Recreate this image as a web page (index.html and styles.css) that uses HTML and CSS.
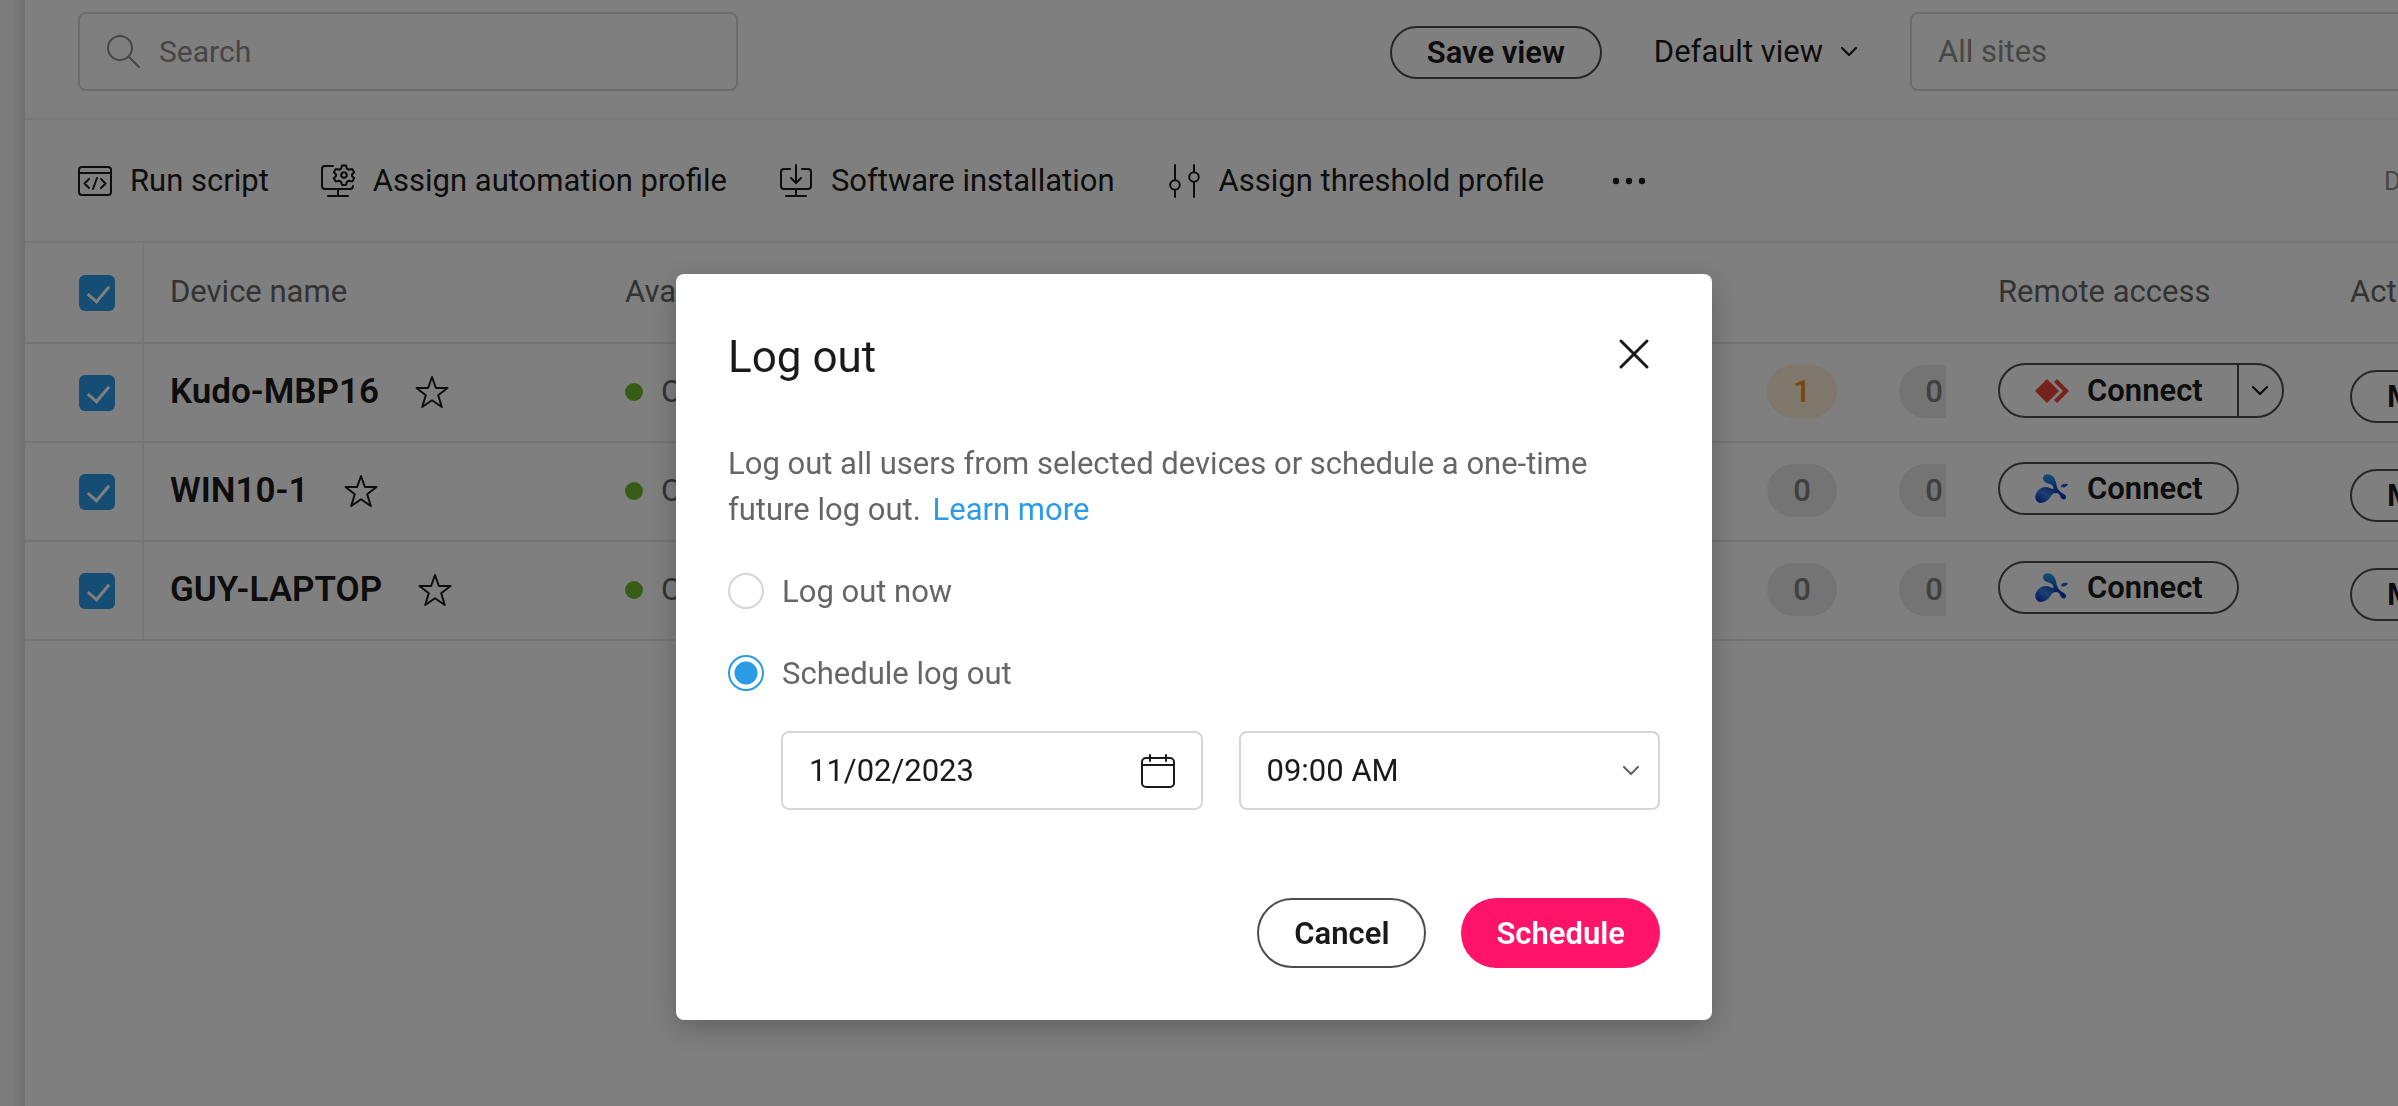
FILE: index.html
```html
<!DOCTYPE html>
<html lang="en">
<head>
<meta charset="UTF-8" />
<meta name="viewport" content="width=device-width, initial-scale=1" />
<title>Devices</title>
<link rel="stylesheet" href="styles.css">
</head>
<body>

<!-- Shared icons -->
<svg class="sprite" aria-hidden="true">
  <defs>
    <linearGradient id="drop" x1="0" y1="0" x2="0" y2="1">
      <stop offset="0" stop-color="#2aa0f4" />
      <stop offset="0.6" stop-color="#0d50c0" />
      <stop offset="1" stop-color="#0a28c0" />
    </linearGradient>
    <linearGradient id="drop-big" x1="1" y1="0" x2="0" y2="1">
      <stop offset="0" stop-color="#0a3ca8" />
      <stop offset="0.5" stop-color="#3a80e8" />
      <stop offset="1" stop-color="#0020b8" />
    </linearGradient>
  </defs>
  <symbol id="star" viewBox="0 0 34 34">
    <path d="M17 2l3.900 11h11.600l-9.300 7.200 3.600 11.800L17 25.200 7.200 32l3.600-11.800L1.500 13h11.600z" fill="none" stroke="currentColor" stroke-width="2" stroke-linejoin="round" />
  </symbol>
  <symbol id="chevron" viewBox="0 0 18 12">
    <path d="M2 2l7 7 7-7" fill="none" stroke="currentColor" stroke-width="2.200" stroke-linecap="round" stroke-linejoin="round" />
  </symbol>
  <symbol id="splash" viewBox="0 0 34 30">
    <path d="M8 5C7 1 12-1 16 1c5 3 5 8 6 12 1 3 3 4 5 6 2 1 4 2 4 4 0 3-3 3-5 1-1-3-2-5-5-5-2 0-4 1-6 3l3-6c1-3 0-5-3-6-4-1-6-2-7-5z" fill="url(#drop)" />
    <path d="M22 16c-3 1-4 3-6 6-2 4-6 7-11 7-5-1-6-7-3-11 3-5 9-6 13-4 3 1 5 2 7 2z" fill="url(#drop-big)" />
    <path d="M26 13c0-3 3-4 7-3-1 3-4 4-7 3z" fill="#1660d8" />
  </symbol>
</svg>

<div class="app">
  <div class="sidebar-edge"></div>
  <main class="page">
    <header class="topbar">
      <label class="search">
        <svg width="34" height="34" viewBox="0 0 34 34" fill="none" stroke="currentColor" stroke-width="2" stroke-linecap="round"><circle cx="13" cy="13" r="12" /><path d="M22 22l10 10" /></svg>
        <input type="text" placeholder="Search" aria-label="Search" />
      </label>
      <button class="pill save-view">Save view</button>
      <button class="view-menu">Default view <svg width="18" height="12"><use href="#chevron" /></svg></button>
      <input class="sites" type="text" placeholder="All sites" aria-label="Sites" />
    </header>

    <nav class="toolbar">
      <button class="tool">
        <svg width="34" height="34" viewBox="0 0 34 34" fill="none" stroke="currentColor" stroke-width="2" stroke-linecap="round" stroke-linejoin="round"><rect x="1" y="3" width="32" height="28" rx="3" /><path d="M1 9h32M11 15l-4.500 4.500 4.500 4.500M23 15l4.500 4.500-4.500 4.500M19 14l-4 11" /></svg>
        Run script
      </button>
      <button class="tool">
        <svg width="34" height="34" viewBox="0 0 34 34" fill="none" stroke="currentColor" stroke-width="2" stroke-linecap="round" stroke-linejoin="round"><path d="M12 2H4a3 3 0 0 0-3 3v17a3 3 0 0 0 3 3h25a3 3 0 0 0 3-3M17 25v7M7 32h20" /><circle cx="23" cy="11" r="2.800" /><path d="M21 1.500h4l.8 3 2.400 1.300 3-.9 2 3.400-2.200 2.200v1.500l2.200 2.200-2 3.400-3-.9-2.400 1.300-.8 3h-4l-.8-3-2.400-1.300-3 .9-2-3.400 2.200-2.200v-1.500l-2.200-2.200 2-3.400 3 .9 2.400-1.300z" /></svg>
        Assign automation profile
      </button>
      <button class="tool">
        <svg width="34" height="34" viewBox="0 0 34 34" fill="none" stroke="currentColor" stroke-width="2" stroke-linecap="round" stroke-linejoin="round"><path d="M11 5H5a3 3 0 0 0-3 3v14a3 3 0 0 0 3 3h24a3 3 0 0 0 3-3V8a3 3 0 0 0-3-3h-6M17 1v17M12 14l5 5 5-5M17 25v7M7 32h20" /></svg>
        Software installation
      </button>
      <button class="tool">
        <svg width="34" height="34" viewBox="0 0 34 34" fill="none" stroke="currentColor" stroke-width="2" stroke-linecap="round"><path d="M8 1v15M8 26v7M27 1v7M27 18v15" /><circle cx="8" cy="21" r="4.800" /><circle cx="27" cy="13" r="4.800" /></svg>
        Assign threshold profile
      </button>
      <button class="more" aria-label="More actions">
        <svg width="34" height="8" viewBox="0 0 34 8" fill="currentColor"><circle cx="4" cy="4" r="3.200" /><circle cx="17" cy="4" r="3.200" /><circle cx="30" cy="4" r="3.200" /></svg>
      </button>
      <span class="device-count">Devices</span>
    </nav>

    <table class="devices">
      <thead>
        <tr>
          <th class="col-check"><input type="checkbox" aria-label="Select all" checked /></th>
          <th class="col-name">Device name</th>
          <th class="col-status">Availability</th>
          <th class="col-alert"></th>
          <th class="col-count"></th>
          <th class="col-remote">Remote access</th>
          <th class="col-actions">Actions</th>
        </tr>
      </thead>
      <tbody>
        <tr>
          <td class="col-check"><input type="checkbox" aria-label="Select Kudo-MBP16" checked /></td>
          <td><div class="device">Kudo-MBP16 <svg width="34" height="34"><use href="#star" /></svg></div></td>
          <td><div class="status">Online</div></td>
          <td><span class="badge warn">1</span></td>
          <td><div class="clip"><span class="badge">0</span></div></td>
          <td class="cell-remote">
            <div class="split">
              <button class="connect"><svg width="34" height="24" viewBox="0 0 34 24" fill="#ef443b"><path d="M12 0l12 12-12 12L0 12z" /><path d="M19 3l3-3 12 12-12 12-3-3 9-9z" /></svg> Connect</button>
              <button class="split-toggle" aria-label="Connect options"><svg width="18" height="12"><use href="#chevron" /></svg></button>
            </div>
          </td>
          <td class="cell-actions"><button class="pill manage">Manage</button></td>
        </tr>
        <tr>
          <td class="col-check"><input type="checkbox" aria-label="Select WIN10-1" checked /></td>
          <td><div class="device">WIN10-1 <svg width="34" height="34"><use href="#star" /></svg></div></td>
          <td><div class="status">Online</div></td>
          <td><span class="badge">0</span></td>
          <td><div class="clip"><span class="badge">0</span></div></td>
          <td class="cell-remote"><button class="pill connect"><svg width="34" height="30"><use href="#splash" /></svg> Connect</button></td>
          <td class="cell-actions"><button class="pill manage">Manage</button></td>
        </tr>
        <tr>
          <td class="col-check"><input type="checkbox" aria-label="Select GUY-LAPTOP" checked /></td>
          <td><div class="device">GUY-LAPTOP <svg width="34" height="34"><use href="#star" /></svg></div></td>
          <td><div class="status">Online</div></td>
          <td><span class="badge">0</span></td>
          <td><div class="clip"><span class="badge">0</span></div></td>
          <td class="cell-remote"><button class="pill connect"><svg width="34" height="30"><use href="#splash" /></svg> Connect</button></td>
          <td class="cell-actions"><button class="pill manage">Manage</button></td>
        </tr>
      </tbody>
    </table>
  </main>
</div>

<!-- Log out dialog -->
<div class="overlay">
  <form class="modal" role="dialog" aria-labelledby="modal-title">
    <div class="modal-head">
      <h2 id="modal-title">Log out</h2>
      <button type="button" class="close-btn" aria-label="Close">
        <svg width="32" height="32" viewBox="0 0 32 32" fill="none" stroke="currentColor" stroke-width="3" stroke-linecap="round"><path d="M3 3l26 26M29 3L3 29" /></svg>
      </button>
    </div>
    <p>Log out all users from selected devices or schedule a one-time future log out. <a href="#">Learn more</a></p>
    <label class="choice"><input type="radio" name="when" /> Log out now</label>
    <label class="choice"><input type="radio" name="when" checked /> Schedule log out</label>
    <div class="fields">
      <label class="field">
        <input type="text" value="11/02/2023" aria-label="Date" />
        <svg width="34" height="34" viewBox="0 0 34 34" fill="none" stroke="currentColor" stroke-width="2" stroke-linecap="round"><rect x="1" y="4" width="32" height="29" rx="4" /><path d="M1 11h32M9 1v6M25 1v6" /></svg>
      </label>
      <label class="field">
        <select aria-label="Time"><option>09:00 AM</option></select>
        <svg class="arrow" width="18" height="12"><use href="#chevron" /></svg>
      </label>
    </div>
    <div class="modal-actions">
      <button type="button" class="cancel">Cancel</button>
      <button type="submit" class="submit">Schedule</button>
    </div>
  </form>
</div>

</body>
</html>
```
FILE: styles.css
```css
* { box-sizing: border-box; }
body {
  margin: 0; height: 100vh; overflow: hidden; background: white;
  font-family: Roboto, sans-serif; font-size: 31px; color: #1a1a1a;
}
button, input, select { font: inherit; color: inherit; }
button { background: none; border: none; padding: 0; cursor: pointer; white-space: nowrap; }
svg { flex: none; display: block; }
.sprite { position: absolute; width: 0; height: 0; }

.app { display: flex; height: 100vh; overflow: hidden; }
.sidebar-edge { flex: none; width: 25px; background: linear-gradient(to right, #f8f8f8 50%, #e2e2e2); }
.page { flex: 1; min-width: 0; }

/* Top bar */
.topbar { display: flex; align-items: flex-start; height: 120px; padding: 12px 0 0 53px; border-bottom: 2px solid #eee; overflow: hidden; }
.search {
  display: flex; align-items: center; gap: 18px; flex: none; width: 660px; height: 79px; padding: 0 27px;
  border: 2px solid #d6d6d6; border-radius: 8px; color: #8c8c8c; margin-right: auto; font-size: 30px;
}
.search input { flex: 1; min-width: 0; border: none; background: none; outline: none; padding: 0; }
::placeholder { color: #8c8c8c; opacity: 1; }
.pill { height: 53px; border: 2px solid #4d4d4d; border-radius: 27px; font-weight: 600; }
.save-view { width: 212px; margin: 14px 52px 0 0; }
.view-menu { display: flex; align-items: center; gap: 17px; height: 79px; margin-right: 52px; }
.sites { width: 520px; height: 79px; margin-right: -32px; flex: none; padding: 0 26px; border: 2px solid #d6d6d6; border-radius: 8px; background: none; }

/* Toolbar */
.toolbar { display: flex; align-items: center; gap: 52px; height: 123px; padding-left: 53px; border-bottom: 2px solid #eee; overflow: hidden; }
.tool { display: flex; align-items: center; gap: 18px; }
.more { margin-left: 16px; }
.device-count { flex: none; width: 14px; margin-left: auto; font-size: 26px; color: #8c8c8c; }

/* Device table */
.devices { table-layout: fixed; width: 100%; border-collapse: collapse; }
.devices th { height: 100px; padding: 0 0 2px; text-align: left; font-weight: 400; color: #666; border-bottom: 2px solid #e8e8e8; white-space: nowrap; }
.devices td { height: 99px; padding: 0 0 2px; border-bottom: 2px solid #e8e8e8; vertical-align: middle; }
.devices .col-check { width: 118px; padding: 0 0 0 54px; border-right: 2px solid #eee; }
.devices .col-name { padding-left: 26px; }
.devices td:nth-child(2) { padding-left: 26px; }
.col-name { width: 482px; }
.col-alert { width: 132px; }
.col-count { width: 99px; }
.col-remote { width: 352px; }
.col-actions { width: 48px; }
input[type=checkbox] {
  appearance: none; display: block; width: 36px; height: 36px; margin: 0; border-radius: 6px; background: #2b9be8;
}
input[type=checkbox]:checked::before {
  content: ""; display: block; width: 10px; height: 18px; margin: 6px 0 0 13px;
  border: solid white; border-width: 0 3px 3px 0; transform: rotate(40deg);
}
.device { display: flex; align-items: center; gap: 36px; font-size: 35px; font-weight: 600; }
.status { display: flex; align-items: center; gap: 18px; color: #666; }
.status::before { content: ""; width: 18px; height: 18px; border-radius: 50%; background: #6cb82a; }
.badge {
  display: flex; align-items: center; justify-content: center; width: 70px; height: 53px; flex: none;
  border-radius: 27px; background: #e8e8e8; color: #808080; font-weight: 500;
}
.badge.warn { background: #ffecd9; color: #f0900c; }
.clip { width: 47px; overflow: hidden; }
.devices .cell-remote, .devices .cell-actions { vertical-align: top; padding-top: 19px; }
.devices .cell-actions { padding-top: 26px; overflow: hidden; }
.connect { display: flex; align-items: center; gap: 18px; padding: 0 34px 0 35px; font-weight: 600; }
.split { display: flex; width: 286px; height: 55px; border: 2px solid #4d4d4d; border-radius: 28px; }
.split-toggle { flex: 1; display: flex; align-items: center; justify-content: center; border-left: 2px solid #4d4d4d; }
.manage { padding: 0 35px; }

/* Modal */
.overlay {
  position: fixed; top: 0; left: 0; width: 100%; height: 100%; padding: 274px 10px 0 0;
  background: rgba(0,0,0,0.5); display: flex; justify-content: center; align-items: flex-start;
}
.modal { width: 1036px; padding: 52px; background: white; border-radius: 8px; box-shadow: 0 8px 28px rgba(0,0,0,0.25); }
.modal-head { display: flex; justify-content: space-between; align-items: center; height: 62px; padding-right: 10px; }
.modal h2 { margin: 0; font-size: 44px; font-weight: 400; }
.close-btn { margin-bottom: 6px; }
.modal p { margin: 53px 0 40px; line-height: 46px; color: #666; }
.modal a { margin-left: 4px; color: #2b9be8; text-decoration: none; }
.choice { display: flex; align-items: center; gap: 18px; height: 36px; margin-bottom: 46px; color: #666; }
input[type=radio] { appearance: none; width: 36px; height: 36px; margin: 0; border: 2px solid #d6d6d6; border-radius: 50%; }
input[type=radio]:checked { border-color: #2b9be8; background: radial-gradient(circle, #2b9be8 11px, white 12px); }
.fields { display: flex; gap: 36px; margin: -6px 0 88px 53px; }
.field { flex: 1; min-width: 0; display: flex; align-items: center; height: 79px; padding: 0 26px; border: 2px solid #d6d6d6; border-radius: 8px; }
.field input, .field select { flex: 1; width: 0; min-width: 0; border: none; background: none; outline: none; padding: 0; appearance: none; }
.field .arrow { color: #666; margin-right: -8px; }
.modal-actions { display: flex; justify-content: flex-end; gap: 35px; }
.modal-actions button { height: 70px; padding: 0 35px; border-radius: 35px; font-weight: 600; }
.modal-actions .cancel { border: 2px solid #4d4d4d; }
.modal-actions .submit { background: #ff1469; color: white; }
```
